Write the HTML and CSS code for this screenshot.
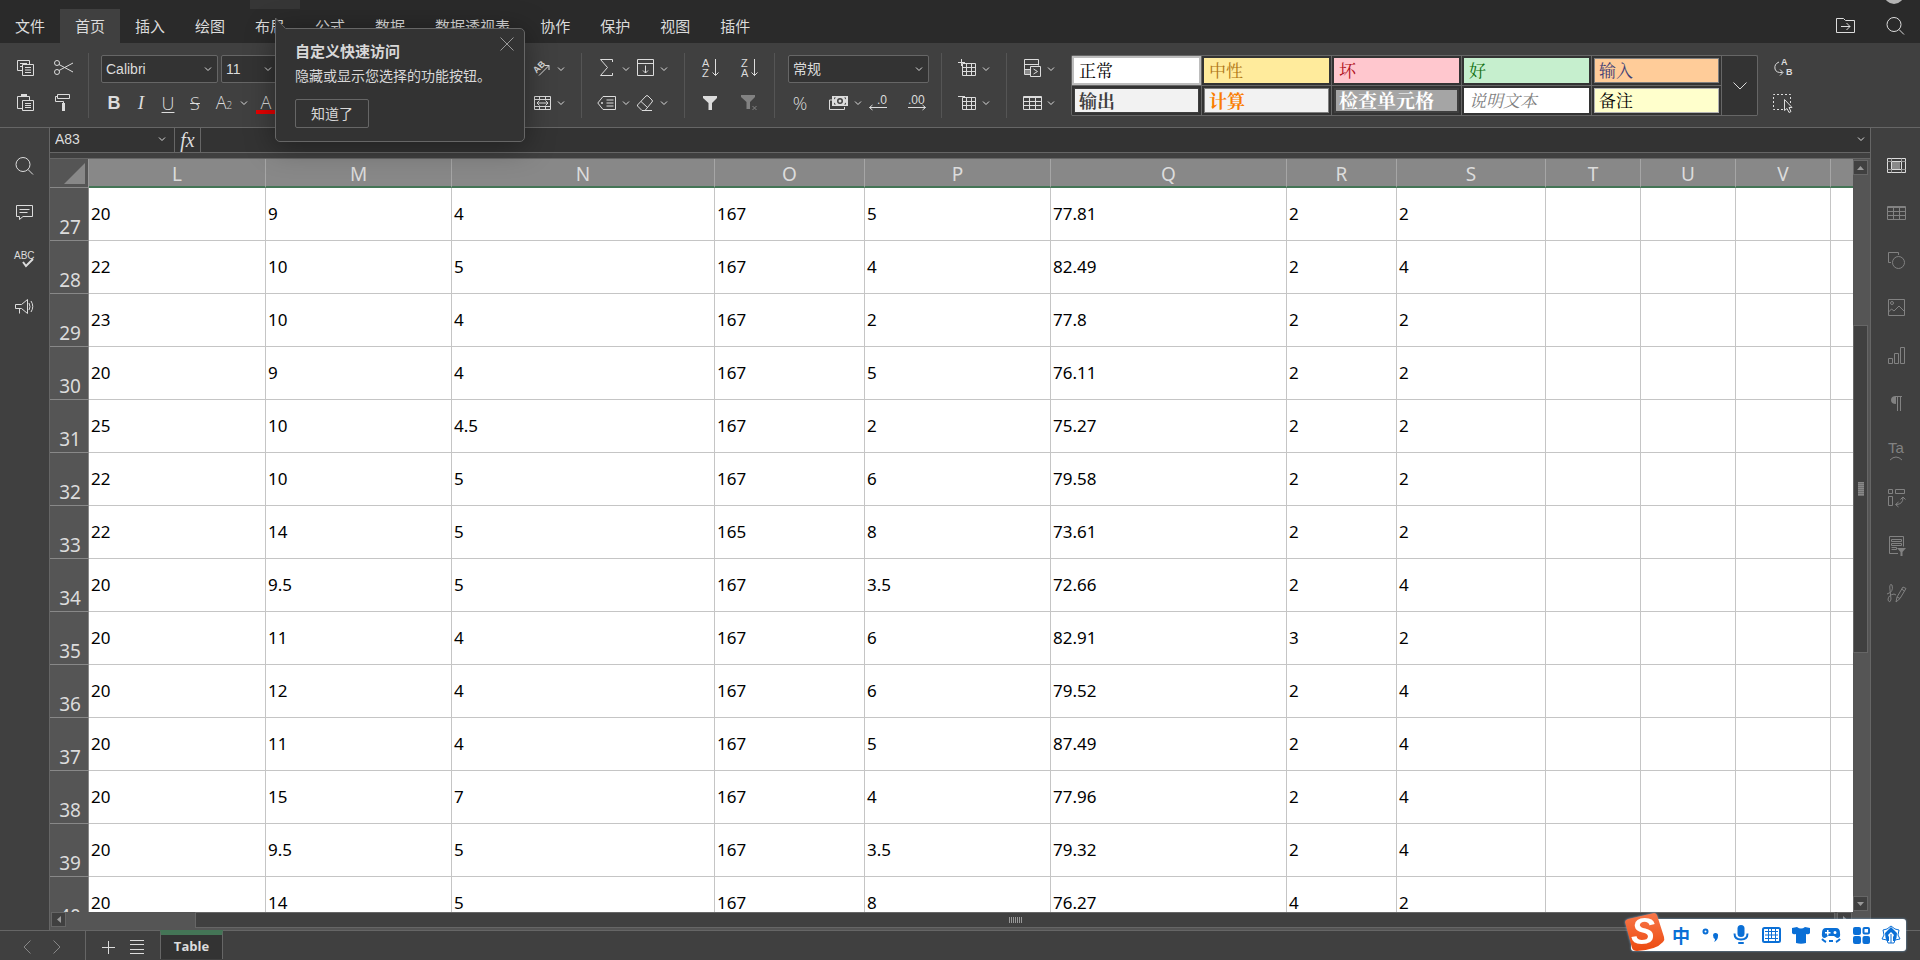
FILE: index.html
```html
<!DOCTYPE html>
<html lang="zh-CN">
<head>
<meta charset="utf-8">
<title>Table</title>
<link rel="stylesheet" href="styles.css">
</head>
<body>
<svg class="defs" aria-hidden="true">
  <symbol id="chev" viewBox="0 0 10 20"><path d="M2 8.500l3 3 3-3"/></symbol>
  <symbol id="search" viewBox="0 0 20 20"><circle cx="9" cy="8.500" r="7"/><path d="M14 13.500l5 5"/></symbol>
</svg>

<header class="titlebar">
  <div class="title-strip"><span class="strip-chip"></span><span class="avatar"></span></div>
  <nav class="tabs">
    <button class="tab">文件</button>
    <button class="tab active">首页</button>
    <button class="tab">插入</button>
    <button class="tab">绘图</button>
    <button class="tab">布局</button>
    <button class="tab">公式</button>
    <button class="tab">数据</button>
    <button class="tab">数据透视表</button>
    <button class="tab">协作</button>
    <button class="tab">保护</button>
    <button class="tab">视图</button>
    <button class="tab">插件</button>
    <div class="tab-tools">
      <button class="ic" aria-label="打开文件位置"><svg viewBox="0 0 20 20"><path d="M1.500 2.500h7l2 2h9v12h-18zM6 10.500h9M11.500 7l3.500 3.500-3.500 3.500"/></svg></button>
      <button class="ic" aria-label="搜索"><svg><use href="#search"/></svg></button>
    </div>
  </nav>
</header>

<section class="ribbon">
  <div class="group g-clip">
    <div class="row">
      <button class="ic" aria-label="复制"><svg viewBox="0 0 20 20"><path d="M7 11.500H2.500v-10h12V5M5 4.500h7M5 7.500h2M7.500 5.500h11v11h-11zM10 8.500h6M10 11h6M10 13.500h6"/></svg></button>
      <button class="ic" aria-label="剪切"><svg viewBox="0 0 20 20"><circle cx="4" cy="4" r="2.500"/><circle cx="4" cy="13" r="2.500"/><path d="M6 5.500L20 13M6 11.500L20 4"/></svg></button>
    </div>
    <div class="row low">
      <button class="ic" aria-label="粘贴"><svg viewBox="0 0 20 20"><path d="M7 15.500H2.500v-12h12V7M7.500 7.500h11v10h-11zM10 10.500h6M10 12.500h6M10 14.500h6"/><path class="fill" d="M6 1h6v3H6z"/></svg></button>
      <button class="ic" aria-label="格式刷"><svg viewBox="0 0 20 20"><path d="M4.500 1.500h12v4h-12zM4.500 3.500h-2v5h8V10"/><path class="fill" d="M9 10h3v8H9z"/></svg></button>
    </div>
  </div>

  <div class="group g-font">
    <div class="row">
      <label class="combo font-name"><select aria-label="字体"><option>Calibri</option></select><svg class="cv"><use href="#chev"/></svg></label>
      <label class="combo font-size"><select aria-label="字号"><option>11</option></select><svg class="cv"><use href="#chev"/></svg></label>
    </div>
    <div class="row low">
      <button class="ic letter"><b>B</b></button>
      <button class="ic letter serif"><i>I</i></button>
      <button class="ic letter light"><u>U</u></button>
      <button class="ic letter light"><s>S</s></button>
      <button class="split letter light"><span>A<small>2</small></span><svg class="cv"><use href="#chev"/></svg></button>
      <button class="ic letter light colour">A</button>
    </div>
  </div>

  <div class="group g-align">
    <div class="row">
      <button class="split" aria-label="方向"><svg viewBox="0 0 20 20"><text class="t8b" x="1" y="12" transform="rotate(-45 6 9)">AB</text><path d="M7 16.500L17 6.500M12.500 6.500H17V11"/></svg><svg class="cv"><use href="#chev"/></svg></button>
    </div>
    <div class="row low">
      <button class="split" aria-label="合并"><svg viewBox="0 0 20 20"><path d="M2.500 3.500h16v13h-16zM2.500 6.500h16M2.500 13.500h16M7.500 3.500v3M13.500 3.500v3M7.500 13.500v3M13.500 13.500v3M5 10h11M7.500 7.500L5 10l2.500 2.500M13.500 7.500L16 10l-2.500 2.500"/></svg><svg class="cv"><use href="#chev"/></svg></button>
    </div>
  </div>

  <div class="group g-edit">
    <div class="row">
      <button class="split" aria-label="求和"><svg viewBox="0 0 20 20"><path d="M15.500 3V.5h-12l7 8-7 8h12V14"/></svg><svg class="cv"><use href="#chev"/></svg></button>
      <button class="split" aria-label="填充"><svg viewBox="0 0 20 20"><path d="M2.500.5h16v16h-16zM2.500 4.500h16M10.500 6.500v7.500M8 11.500l2.500 2.500 2.500-2.500"/></svg><svg class="cv"><use href="#chev"/></svg></button>
    </div>
    <div class="row low">
      <button class="split" aria-label="命名范围"><svg viewBox="0 0 20 20"><path d="M6 3.500h12.500v13H6L.8 10zM9.500 7h7M9.500 10h7M9.500 13h7"/><circle class="fill" cx="5" cy="10" r="1"/></svg><svg class="cv"><use href="#chev"/></svg></button>
      <button class="split" aria-label="清除"><svg viewBox="0 0 20 20"><path d="M2.500 12l8.500-9q1-1 2 0l4 4q1 1 0 2l-7 8.500H7L2.500 13zM6 8.500l6.500 6M10 17.500h7"/></svg><svg class="cv"><use href="#chev"/></svg></button>
    </div>
  </div>

  <div class="group g-sort">
    <div class="row">
      <button class="ic" aria-label="升序"><svg viewBox="0 0 20 20"><text class="t11" x="2" y="8">A</text><text class="t11" x="2" y="18">Z</text><path d="M15.500 0v16.500M12.500 13.500l3 3 3-3"/></svg></button>
      <button class="ic" aria-label="降序"><svg viewBox="0 0 20 20"><text class="t11" x="2" y="8">Z</text><text class="t11" x="2" y="18">A</text><path d="M15.500 0v16.500M12.500 13.500l3 3 3-3"/></svg></button>
    </div>
    <div class="row low">
      <button class="ic" aria-label="筛选"><svg viewBox="0 0 20 20"><path class="fill" d="M3 3h14v2l-5 5v7H8.500v-7L3 5z"/></svg></button>
      <button class="ic dim" aria-label="清除筛选"><svg viewBox="0 0 20 20"><path class="fill" d="M2 2h14v2l-5 5v7H7.500V9L2 4z"/><path d="M13.500 13l4 4M17.500 13l-4 4"/></svg></button>
    </div>
  </div>

  <div class="group g-num">
    <div class="row">
      <label class="combo num-format"><select aria-label="数字格式"><option>常规</option></select><svg class="cv"><use href="#chev"/></svg></label>
    </div>
    <div class="row low">
      <button class="ic letter light">%</button>
      <button class="split" aria-label="会计格式"><svg viewBox="0 0 20 20"><path d="M3 7H.5v9.500h15V14"/><path class="fill" fill-rule="evenodd" d="M3 3h16v10H3zM11 5a3 3 0 100 6 3 3 0 000-6zM5 4.500v2l2-2zM17 4.500v2l-2-2zM5 11.500v-2l2 2zM17 11.500v-2l-2 2z"/><circle class="fill" cx="11" cy="8" r="1.500"/></svg><svg class="cv"><use href="#chev"/></svg></button>
      <button class="ic dec" aria-label="减少小数位"><svg viewBox="0 0 20 20"><text class="t12" x="9" y="11">.0</text><path d="M1.500 14.500H19M4.500 12l-3 2.500 3 2.500"/></svg></button>
      <button class="ic" aria-label="增加小数位"><svg viewBox="0 0 20 20"><text class="t12" x="1" y="11">.00</text><path d="M1 14.500h17.500M15.500 12l3 2.500-3 2.500"/></svg></button>
    </div>
  </div>

  <div class="group g-cells">
    <div class="row">
      <button class="split" aria-label="插入单元格"><svg viewBox="0 0 20 20"><path d="M5.500 4.500h13v12h-13zM9.500 4.500v12M14.500 4.500v12M5.500 8.500h13M5.500 12.500h13M1 3.500h7M4.500 0v7"/></svg><svg class="cv"><use href="#chev"/></svg></button>
    </div>
    <div class="row low">
      <button class="split" aria-label="删除单元格"><svg viewBox="0 0 20 20"><path d="M5.500 4.500h13v12h-13zM9.500 4.500v12M14.500 4.500v12M5.500 8.500h13M5.500 12.500h13M1 3.500h7"/></svg><svg class="cv"><use href="#chev"/></svg></button>
    </div>
  </div>

  <div class="group g-styles">
    <div class="row">
      <button class="split" aria-label="条件格式"><svg viewBox="0 0 20 20"><path class="soft" d="M3 11h5v5H3z"/><path d="M8 15.500H2.500V.5h14v6M2.500 5.500h14M2.500 10.500h6M8.500 7.500h10v10h-10zM11.500 10l4 2.500-4 2.500"/></svg><svg class="cv"><use href="#chev"/></svg></button>
    </div>
    <div class="row low">
      <button class="split" aria-label="套用表格格式"><svg viewBox="0 0 20 20"><path d="M1.500 3.500h18v13h-18zM7.500 3.500v13M13.500 3.500v13M1.500 8.500h18M1.500 12.500h18M1.500 4.500h18"/></svg><svg class="cv"><use href="#chev"/></svg></button>
    </div>
  </div>

  <div class="gallery">
    <div class="styles-grid">
      <button class="cell selected"><span class="sw normal">正常</span></button>
      <button class="cell"><span class="sw neutral">中性</span></button>
      <button class="cell"><span class="sw bad">坏</span></button>
      <button class="cell"><span class="sw good">好</span></button>
      <button class="cell"><span class="sw input">输入</span></button>
      <button class="cell"><span class="sw output">输出</span></button>
      <button class="cell"><span class="sw calc">计算</span></button>
      <button class="cell"><span class="sw check">检查单元格</span></button>
      <button class="cell"><span class="sw explain">说明文本</span></button>
      <button class="cell"><span class="sw note">备注</span></button>
    </div>
    <button class="more" aria-label="更多样式"><svg viewBox="0 0 16 10"><path d="M1.500 1.500L8 8l6.500-6.500"/></svg></button>
  </div>

  <div class="group g-find">
    <div class="row">
      <button class="ic" aria-label="替换"><svg viewBox="0 0 20 20"><text class="t8b" x="8" y="6">A</text><text class="t8b" x="13" y="16">B</text><path d="M6 3Q1 5 2 10q1 4 7.500 3.500M7 10.500l3 3-3 3"/></svg></button>
    </div>
    <div class="row low">
      <button class="ic" aria-label="全选"><svg viewBox="0 0 20 20"><path stroke-dasharray="2 2" d="M10 16.500H.5V1.500h17V12"/><path class="pointer" d="M11.500 6.500v11l2.500-2 2 4 2-1-2-4h3z"/></svg></button>
    </div>
  </div>
</section>

<main class="work">
  <aside class="side left">
    <button class="ic" aria-label="查找"><svg><use href="#search"/></svg></button>
    <button class="ic" aria-label="批注"><svg viewBox="0 0 20 20"><path d="M2.500 2.500h16v11H9l-3.500 3v-3h-3zM5.500 6.500h10M5.500 9.500h8"/></svg></button>
    <button class="ic" aria-label="拼写检查"><svg viewBox="0 0 20 20"><text class="t10" x="0" y="9">ABC</text><path class="thick" d="M9 12l3 4 7-7"/></svg></button>
    <button class="ic" aria-label="反馈"><svg viewBox="0 0 20 20"><path d="M1.500 7.500h6l6-5v14l-6-5h-6zM5.500 11.500v5M15 6q2 4 0 7M17 4q3.500 5.500 0 11"/></svg></button>
  </aside>

  <section class="sheet">
    <div class="formula">
      <label class="name-box"><input type="text" value="A83" aria-label="名称框"><svg class="cv"><use href="#chev"/></svg></label>
      <button class="fx"><i>fx</i></button>
      <input class="formula-input" type="text" aria-label="编辑栏">
      <button class="expand" aria-label="展开编辑栏"><svg class="cv"><use href="#chev"/></svg></button>
    </div>

    <div class="viewport">
      <div class="grid-clip">
        <table class="cells">
          <colgroup><col class="c-h"><col class="c-l"><col class="c-m"><col class="c-n"><col class="c-o"><col class="c-m"><col class="c-q"><col class="c-r"><col class="c-s"><col class="c-t"><col class="c-t"><col class="c-t"><col></colgroup>
          <thead><tr><th class="corner"><svg viewBox="0 0 21 21"><path d="M21 0v21H0z"/></svg></th><th>L</th><th>M</th><th>N</th><th>O</th><th>P</th><th>Q</th><th>R</th><th>S</th><th>T</th><th>U</th><th>V</th><th></th></tr></thead>
          <tbody>
            <tr><th>27</th><td>20</td><td>9</td><td>4</td><td>167</td><td>5</td><td>77.81</td><td>2</td><td>2</td><td></td><td></td><td></td><td></td></tr>
            <tr><th>28</th><td>22</td><td>10</td><td>5</td><td>167</td><td>4</td><td>82.49</td><td>2</td><td>4</td><td></td><td></td><td></td><td></td></tr>
            <tr><th>29</th><td>23</td><td>10</td><td>4</td><td>167</td><td>2</td><td>77.8</td><td>2</td><td>2</td><td></td><td></td><td></td><td></td></tr>
            <tr><th>30</th><td>20</td><td>9</td><td>4</td><td>167</td><td>5</td><td>76.11</td><td>2</td><td>2</td><td></td><td></td><td></td><td></td></tr>
            <tr><th>31</th><td>25</td><td>10</td><td>4.5</td><td>167</td><td>2</td><td>75.27</td><td>2</td><td>2</td><td></td><td></td><td></td><td></td></tr>
            <tr><th>32</th><td>22</td><td>10</td><td>5</td><td>167</td><td>6</td><td>79.58</td><td>2</td><td>2</td><td></td><td></td><td></td><td></td></tr>
            <tr><th>33</th><td>22</td><td>14</td><td>5</td><td>165</td><td>8</td><td>73.61</td><td>2</td><td>2</td><td></td><td></td><td></td><td></td></tr>
            <tr><th>34</th><td>20</td><td>9.5</td><td>5</td><td>167</td><td>3.5</td><td>72.66</td><td>2</td><td>4</td><td></td><td></td><td></td><td></td></tr>
            <tr><th>35</th><td>20</td><td>11</td><td>4</td><td>167</td><td>6</td><td>82.91</td><td>3</td><td>2</td><td></td><td></td><td></td><td></td></tr>
            <tr><th>36</th><td>20</td><td>12</td><td>4</td><td>167</td><td>6</td><td>79.52</td><td>2</td><td>4</td><td></td><td></td><td></td><td></td></tr>
            <tr><th>37</th><td>20</td><td>11</td><td>4</td><td>167</td><td>5</td><td>87.49</td><td>2</td><td>4</td><td></td><td></td><td></td><td></td></tr>
            <tr><th>38</th><td>20</td><td>15</td><td>7</td><td>167</td><td>4</td><td>77.96</td><td>2</td><td>4</td><td></td><td></td><td></td><td></td></tr>
            <tr><th>39</th><td>20</td><td>9.5</td><td>5</td><td>167</td><td>3.5</td><td>79.32</td><td>2</td><td>4</td><td></td><td></td><td></td><td></td></tr>
            <tr><th>40</th><td>20</td><td>14</td><td>5</td><td>167</td><td>8</td><td>76.27</td><td>4</td><td>2</td><td></td><td></td><td></td><td></td></tr>
          </tbody>
        </table>
      </div>
      <div class="vscroll">
        <button class="arrow" aria-label="向上"><svg viewBox="0 0 13 13"><path d="M3 9l3.500-4L10 9z"/></svg></button>
        <div class="vtrack"><div class="vthumb"><span></span></div></div>
        <button class="arrow" aria-label="向下"><svg viewBox="0 0 13 13"><path d="M3 5l3.500 4L10 5z"/></svg></button>
      </div>
      <div class="hscroll">
        <button class="arrow" aria-label="向左"><svg viewBox="0 0 13 13"><path d="M9 3L5 6.500 9 10z"/></svg></button>
        <div class="htrack"><div class="hthumb"><span></span></div></div>
        <button class="arrow" aria-label="向右"><svg viewBox="0 0 13 13"><path d="M5 3l4 3.500L5 10z"/></svg></button>
      </div>
      <div class="scroll-corner"></div>
    </div>
  </section>

  <aside class="side right">
    <button class="ic on" aria-label="单元格设置"><svg viewBox="0 0 20 20"><path class="soft" d="M6 6h8v7H6z"/><path d="M1.500 2.500h18v14h-18zM5.500 5.500h10v8h-10z"/><path class="faint" d="M5.500 2.500v3M15.500 2.500v3M5.500 13.500v3M15.500 13.500v3M1.500 5.500h4M15.500 5.500h4M1.500 13.500h4M15.500 13.500h4"/></svg></button>
    <button class="ic" aria-label="表格设置"><svg viewBox="0 0 20 20"><path d="M1.500 3.500h18v13h-18zM7.500 3.500v13M13.500 3.500v13M1.500 8.500h18M1.500 12.500h18M1.500 4.500h18"/></svg></button>
    <button class="ic" aria-label="形状设置"><svg viewBox="0 0 20 20"><path d="M5 11.500H2.500v-10h10V4"/><circle cx="12.500" cy="11.500" r="6"/></svg></button>
    <button class="ic" aria-label="图像设置"><svg viewBox="0 0 20 20"><path d="M2.500 1.500h16v16h-16zM2.500 14l3-3 2.500 2 5-5 5.500 5.500"/><circle cx="6" cy="5" r="1.500"/></svg></button>
    <button class="ic" aria-label="图表设置"><svg viewBox="0 0 20 20"><path d="M2.500 12.500h4v5h-4zM8.500 7.500h4v10h-4zM14.500 1.500h4v16h-4z"/></svg></button>
    <button class="ic" aria-label="段落设置"><svg viewBox="0 0 20 20"><path class="fill" d="M10 3v8q-5 0-5-4t5-4z"/><path d="M9 3.500h7M11.500 3v15M14.500 3v15"/></svg></button>
    <button class="ic" aria-label="艺术字设置"><svg viewBox="0 0 20 20"><text class="t14" x="2" y="12">Ta</text><path d="M4 19q6-6 12 0"/></svg></button>
    <button class="ic" aria-label="数据透视表设置"><svg viewBox="0 0 20 20"><path d="M2.500 1.500h4v4h-4zM9.500 1.500h9v4h-9zM2.500 8.500h4v9h-4zM10 16.500q7 0 7-7M12.500 14l-3 2.500 3 2.500M14.500 11.500L17 9l2.500 2.500"/></svg></button>
    <button class="ic" aria-label="切片器设置"><svg viewBox="0 0 20 20"><path d="M12 17.500H3.500v-17h14v10M5.500 3.500h10v2h-10zM5.500 7.500h10v2h-10zM5.500 11.500h5v2h-5"/><path class="fill" d="M11 12h9l-3.500 4v4h-2v-4z"/></svg></button>
    <button class="ic" aria-label="签名设置"><svg viewBox="0 0 20 20"><path d="M1 11q7-2 5-9-3-2-2 5l1 9q-1 5-3 1 0-5 6-6l2 1M10 19l1-5 6-10 3 1.500-6 10zM11 14l3 1.500M15.500 6l3 2"/></svg></button>
  </aside>
</main>

<footer class="status">
  <div class="sheet-nav">
    <button aria-label="上一工作表"><svg viewBox="0 0 10 16"><path d="M8.500 1.500L2 8l6.500 6.500"/></svg></button>
    <button aria-label="下一工作表"><svg viewBox="0 0 10 16"><path d="M1.500 1.500L8 8l-6.500 6.500"/></svg></button>
  </div>
  <div class="sheet-add">
    <button aria-label="添加工作表"><svg viewBox="0 0 14 14"><path d="M7.500 1v13M1 7.500h13"/></svg></button>
    <button aria-label="工作表列表"><svg viewBox="0 0 14 14"><path d="M0 .5h14M0 4.500h14M0 9.500h14M0 13.500h14"/></svg></button>
  </div>
  <button class="sheet-tab">Table</button>
</footer>

<div class="tip" role="dialog" aria-labelledby="tip-title">
  <svg class="tip-tail" viewBox="0 0 12 13"><path class="tail-bg" d="M.5 13V1L11 11.500V13z"/><path class="tail-line" d="M.5 13V1L10.500 11.500"/></svg>
  <button class="tip-close" aria-label="关闭"><svg viewBox="0 0 14 14"><path d="M.5.5l13 13M13.500.5l-13 13"/></svg></button>
  <h2 id="tip-title">自定义快速访问</h2>
  <p>隐藏或显示您选择的功能按钮。</p>
  <button class="tip-ok">知道了</button>
</div>

<div class="ime">
  <svg class="ime-logo" viewBox="0 0 40 38"><defs><linearGradient id="og" x1="0" y1="0" x2="0" y2="1"><stop offset="0" stop-color="#f8774a"/><stop offset="1" stop-color="#ec4a10"/></linearGradient></defs><path fill="url(#og)" d="M3 6L29 0q2 0 3 2l7 22q1 3-1 5-7 8-26 9-4 0-5-3L0 9q0-2 3-3z"/><text class="logo-s" x="6" y="31">S</text></svg>
  <div class="ime-items">
    <button class="zh">中</button>
    <button aria-label="标点"><svg viewBox="0 0 20 20"><circle class="ring" cx="4.500" cy="6.500" r="2"/><path d="M12 10a2.500 2.500 0 115 1q0 4-4 6 1-1 1-3-2-1-2-4z"/></svg></button>
    <button aria-label="语音"><svg viewBox="0 0 20 20"><rect x="6.500" y="0" width="7" height="12" rx="3.500"/><path class="ring" d="M3.500 8.500q0 6 6.500 6t6.500-6"/><rect x="7" y="17" width="6" height="2" rx="1"/></svg></button>
    <button aria-label="键盘"><svg viewBox="0 0 20 20"><rect class="ring" x="2" y="3" width="17" height="14" rx="1.500"/><path class="ring thin" d="M4 6.500h13M4 10h13M4 13.500h13M7.500 4v9M10.500 4v9M14.500 4v12M7.500 13v3"/></svg></button>
    <button aria-label="皮肤"><svg viewBox="0 0 20 20"><path d="M6 2q4 3 8 0l5 1v5q-1 2-4 1v9q-5 1.500-10 0V9Q2 10 1 8V3z"/></svg></button>
    <button aria-label="游戏"><svg viewBox="0 0 20 20"><path fill-rule="evenodd" d="M5 3h10q4 0 4 5 1 5-3 5l-3-2H7l-3 2q-4 0-3-5 0-5 4-5zM6 5v2H4v1.500h2v2h1.500v-2h2V7h-2V5zM14 6a1.500 1.500 0 100 3 1.500 1.500 0 000-3z"/><path class="ring" d="M1 14q2 2 4 3M19 14q-2 2-4 3M8 16h4"/></svg></button>
    <button aria-label="工具箱"><svg viewBox="0 0 20 20"><rect x="2" y="2" width="8" height="8" rx="2"/><rect class="ring" x="12.500" y="3" width="5.500" height="5.500" rx="1"/><rect x="2" y="11" width="8" height="8" rx="2"/><rect x="11.500" y="11" width="7.500" height="8" rx="2"/></svg></button>
    <button aria-label="设置"><svg viewBox="0 0 20 20"><path class="ring thin" d="M2 5l4-1 4-3 4 3 4 1-1 5 2 4-5 1-1 3H7l-1-3-5-1 2-4z"/><path fill-rule="evenodd" d="M10 2l6 6q0 5-2 8h-2v-4l1-2-3-3-3 3 1 2v4H6q-2-3-2-8zM9.500 9h1v9h-1z"/></svg></button>
  </div>
</div>
</body>
</html>
```

FILE: styles.css
```css
* { box-sizing: border-box; }

html, body { height: 100%; }

body {
  margin: 0;
  display: flex;
  flex-direction: column;
  overflow: hidden;
  background: #404040;
  color: #dcdcdc;
  font: 14px "Liberation Sans", "Noto Sans CJK SC", sans-serif;
}

button, input, select {
  margin: 0;
  padding: 0;
  border: 0;
  border-radius: 0;
  background: none;
  color: inherit;
  font: inherit;
  outline: none;
}

svg { display: block; overflow: visible; fill: none; stroke: currentColor; stroke-width: 1; }
svg text { fill: currentColor; stroke: none; font-family: "Liberation Sans", sans-serif; }
.defs { position: absolute; width: 0; height: 0; }
.fill { fill: currentColor; stroke: none; }
.soft { fill: #8a8a8a; stroke: none; }
.faint { stroke: #999; }
.thick { stroke-width: 2; }
.pointer { fill: #404040; }
.t8b { font-size: 9px; font-weight: bold; }
.t10 { font-size: 10px; }
.t11 { font-size: 11px; }
.t12 { font-size: 12px; }
.t14 { font-size: 15px; }

/* title and tabs */
.titlebar { background: #2a2a2a; }
.title-strip {
  display: flex;
  justify-content: space-between;
  height: 9px;
  padding: 0 16px 0 250px;
  overflow: hidden;
}
.strip-chip { width: 50px; background: #363636; }
.avatar { width: 20px; height: 20px; margin-top: -16px; border-radius: 50%; background: #b4b4b4; }
.tabs { display: flex; height: 34px; }
.tab { padding: 1px 15px 0; font-size: 15px; line-height: 33px; white-space: nowrap; }
.tab.active { background: #404040; }
.tab-tools { display: flex; align-items: center; gap: 30px; margin-left: auto; padding-right: 15px; }

.ic { flex: none; width: 20px; height: 20px; }
.ic svg { width: 20px; height: 20px; }
.cv { flex: none; width: 10px; height: 20px; }

/* ribbon */
.ribbon {
  display: flex;
  flex: none;
  height: 85px;
  padding-top: 10px;
  border-bottom: 1px solid #666;
}
.group { flex: none; height: 65px; padding: 2px 15px 0; border-right: 1px solid #555; }
.row { display: flex; align-items: center; height: 28px; }
.row.low { height: 20px; margin-top: 10px; }
.split { display: flex; flex: none; align-items: center; gap: 4px; width: 34px; height: 20px; }
.split svg:first-child { flex: none; width: 20px; height: 20px; }

.g-clip .row { gap: 18px; }
.g-font { width: 192px; padding: 2px 0 0 12px; border-right: 0; }
.g-font .row { gap: 3px; }
.g-font .row.low { gap: 7px; padding-left: 3px; }
.g-align { width: 301px; }
.g-align .row { justify-content: flex-end; }
.g-edit .row { gap: 4px; }
.g-sort .row { gap: 19px; }
.g-num { padding: 2px 12px 0 13px; }
.g-num .row.low { gap: 19px; padding-left: 2px; }
.g-num .dec { margin-left: -14px; }
.g-styles, .g-find { border-right: 0; }

.letter { font-size: 18px; line-height: 20px; text-align: center; }
.letter.serif { font-family: "Liberation Serif", serif; font-size: 19px; }
.letter.light { font-family: "Open Sans", sans-serif; font-size: 18px; font-weight: 300; }
.letter u { text-underline-offset: 2px; text-decoration-thickness: 1px; }
.letter s { text-decoration-thickness: 1px; }
.letter small { font-size: 10px; }
.letter.split { gap: 3px; width: 37px; }
.letter span { width: 24px; white-space: nowrap; }
.letter.colour { height: 22px; border-bottom: 4px solid #e60000; }
.dim { color: #828282; }

.combo {
  display: flex;
  align-items: center;
  height: 28px;
  padding: 0 4px;
  border: 1px solid #666;
  border-radius: 2px;
  background: #333;
}
.combo select { flex: 1; min-width: 0; appearance: none; height: 26px; font-size: 14px; }
.combo.font-name { width: 117px; }
.combo.font-size { width: 57px; }
.combo.num-format { width: 141px; }

/* cell styles gallery */
.gallery {
  display: flex;
  flex: none;
  height: 61px;
  margin-top: 2px;
  border: 1px solid #666;
  border-bottom: 0;
  border-radius: 2px;
  background: #333;
}
.styles-grid { display: grid; grid-template-columns: repeat(5, 130px); grid-template-rows: 30px 30px; }
.cell { display: flex; padding: 2px; border-right: 1px solid #666; border-bottom: 1px solid #666; }
.cell.selected { background: #bdbdbd; }
.sw {
  flex: 1;
  height: 25px;
  padding-left: 4px;
  border: 1px solid transparent;
  font: 17px/22px "Noto Serif CJK SC", "Noto Sans CJK SC", serif;
  text-align: left;
}
.normal { background: #fff; color: #000; }
.neutral { background: #ffeb9c; color: #b07514; }
.bad { background: #ffc7ce; color: #b01020; }
.good { background: #c6efce; color: #107010; }
.input { border-color: #7f7f7f; background: #ffcc99; color: #3f3f76; }
.output { border-color: #3f3f3f; background: #f2f2f2; color: #3f3f3f; font-size: 18px; font-weight: bold; }
.calc { border-color: #7f7f7f; background: #f2f2f2; color: #fa7d00; font-size: 18px; font-weight: bold; }
.check { border: 2px solid #3f3f3f; background: #a5a5a5; color: #fff; font-size: 19px; font-weight: bold; line-height: 20px; padding-left: 3px; }
.explain { background: #fff; color: #7f7f7f; font-style: italic; }
.note { border-color: #b2b2b2; background: #ffffcc; color: #000; }
.more { display: flex; align-items: center; justify-content: center; width: 35px; border-bottom: 1px solid #666; }
.more svg { width: 16px; height: 10px; }

/* work area */
.work { display: flex; flex: 1; min-height: 0; }
.side { display: flex; flex: none; flex-direction: column; }
.side.left { gap: 27px; width: 50px; padding-top: 28px; padding-left: 14px; border-right: 1px solid #666; }
.side.right { width: 49px; height: 489px; padding-top: 14px; color: #828282; }
.side.right .ic { flex: 1; width: 49px; display: flex; align-items: center; justify-content: center; }
.side.right .on { color: #dcdcdc; }
.sheet { display: flex; flex: 1; flex-direction: column; min-width: 0; border-right: 1px solid #666; }

.formula { display: flex; flex: none; height: 25px; margin-bottom: 5px; border-bottom: 1px solid #666; background: #333; }
.name-box { display: flex; align-items: center; width: 125px; padding: 0 7px 2px 5px; border-right: 1px solid #666; }
.name-box input { flex: 1; min-width: 0; font-size: 14px; }
.fx { width: 26px; border-right: 1px solid #666; font: 20px/20px "Liberation Serif", serif; }
.formula-input { flex: 1; min-width: 0; }
.expand { padding-right: 4px; padding-bottom: 2px; }

.viewport {
  display: grid;
  flex: 1;
  grid-template-columns: 1fr 17px;
  grid-template-rows: 1fr 18px;
  min-height: 0;
  border-top: 1px solid #666;
  background: #555;
}
.grid-clip { min-height: 0; overflow: hidden; background: #fff; }
.cells {
  width: 100%;
  table-layout: fixed;
  border-collapse: separate;
  border-spacing: 0;
  font: 17px/20px "Noto Sans", sans-serif;
  color: #000;
}
.c-h { width: 39px; }
.c-l { width: 177px; }
.c-m { width: 186px; }
.c-n { width: 263px; }
.c-o { width: 150px; }
.c-q { width: 236px; }
.c-r { width: 110px; }
.c-s { width: 149px; }
.c-t { width: 95px; }
.cells th { padding: 0; background: #888; color: #dcdcdc; font-size: 19px; font-weight: 400; }
.cells thead th { height: 29px; padding-top: 2px; border-right: 1px solid #a6a6a6; border-bottom: 2px solid #447556; }
.cells thead th.corner { padding: 0; border-right-color: #999; border-bottom: 1px solid #888; background: #555; vertical-align: bottom; }
.corner svg { width: 21px; height: 21px; margin: 0 3px 3px auto; fill: #888; stroke: none; }
.cells tbody th {
  height: 53px;
  padding-right: 7px;
  padding-bottom: 3px;
  border-right: 1px solid #888;
  border-bottom: 1px solid #888;
  background: #555;
  text-align: right;
  vertical-align: bottom;
}
.cells td { height: 53px; padding: 0 2px; border-right: 1px solid #c5c5c5; border-bottom: 1px solid #c5c5c5; vertical-align: middle; }
.cells tr > :last-child { border-right: 0; }

.arrow { flex: none; width: 15px; height: 15px; border: 1px solid #666; background: #404040; color: #999; }
.arrow svg { width: 13px; height: 13px; fill: currentColor; stroke: none; }
.vscroll { display: flex; flex-direction: column; align-items: center; padding: 1px 2px 1px 0; }
.vtrack { flex: 1; width: 15px; padding-top: 150px; }
.vthumb { display: flex; align-items: center; justify-content: center; height: 328px; border: 1px solid #666; background: #404040; }
.vthumb span { width: 6px; height: 14px; background: repeating-linear-gradient(#888 0 1px, #707070 1px 2px); }
.hscroll { display: flex; padding: 0 1px; }
.htrack { flex: 1; padding: 0 2px 0 129px; }
.hthumb { display: flex; align-items: center; justify-content: center; height: 16px; border: 1px solid #666; background: #404040; }
.hthumb span { width: 13px; height: 6px; background: repeating-linear-gradient(90deg, #999 0 1px, transparent 1px 2px); }

/* sheet tabs */
.status { display: flex; flex: none; height: 30px; border-top: 1px solid #666; }
.sheet-nav { display: flex; align-items: center; gap: 20px; width: 86px; padding: 3px 0 0 22px; border-right: 1px solid #666; color: #888; }
.sheet-nav svg { width: 10px; height: 16px; }
.sheet-add { display: flex; align-items: center; gap: 15px; width: 74px; padding: 3px 0 0 15px; }
.sheet-add svg { width: 14px; height: 14px; }
.sheet-tab {
  width: 63px;
  height: 29px;
  margin-top: -1px;
  padding-bottom: 3px;
  border: 1px solid #666;
  border-top: 5px solid #447556;
  border-bottom: 0;
  background: #333;
  font: bold 13px/20px "Open Sans", sans-serif;
}

/* hint bubble over the ribbon */
.tip {
  position: absolute;
  left: 275px;
  top: 28px;
  width: 250px;
  padding: 13px 19px;
  border: 1px solid #666;
  border-radius: 0 5px 5px 5px;
  background: #333;
  box-shadow: 0 4px 30px rgba(0, 0, 0, 0.4);
  color: #d8d8d8;
}
.tip h2 { margin: 0; font-size: 15px; line-height: 20px; }
.tip p { margin: 5px 0 14px; font-size: 14px; line-height: 18px; white-space: nowrap; }
.tip-ok { display: block; width: 74px; height: 29px; padding-bottom: 1px; border: 1px solid #666; border-radius: 2px; }
.tip-tail { position: absolute; left: -1px; top: -12px; width: 12px; height: 13px; }
.tail-bg { fill: #333; stroke: none; }
.tail-line { stroke: #666; }
.tip-close { position: absolute; right: 10px; top: 8px; color: #999; }
.tip-close svg { width: 14px; height: 14px; }

/* floating input method bar */
.ime { position: absolute; right: 14px; bottom: 9px; display: flex; align-items: flex-end; filter: drop-shadow(0 0 1px #6f9fc8); }
.ime-logo { z-index: 1; width: 40px; height: 38px; margin-right: -34px; stroke: none; }
.ime-logo .logo-s { fill: #fff; font: italic bold 36px "Liberation Sans", sans-serif; }
.ime-items {
  display: flex;
  align-items: center;
  gap: 10px;
  height: 32px;
  padding: 0 5px 0 40px;
  border-radius: 3px;
  background: #fff;
  color: #0a6fd6;
}
.ime-items button { width: 20px; height: 20px; }
.ime-items svg { width: 20px; height: 20px; fill: currentColor; stroke: none; }
.ime-items .ring { fill: none; stroke: currentColor; stroke-width: 2; }
.ime-items .thin { stroke-width: 1; }
.ime-items .zh { font: bold 18px/20px "Noto Sans CJK SC", sans-serif; }
```
